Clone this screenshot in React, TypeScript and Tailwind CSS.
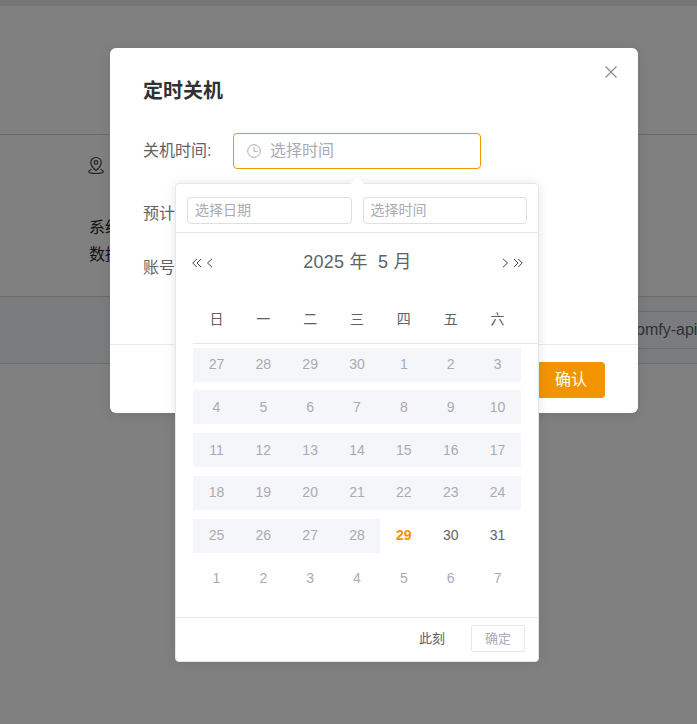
import React from "react";

const FONT = "font-['Liberation_Sans','Noto_Sans_CJK_SC',sans-serif]";

type Day = { t: number; kind: "off" | "range" | "today" | "now" };

const rows: Day[][] = [
  [27, 28, 29, 30, 1, 2, 3].map((t) => ({ t, kind: "range" as const })),
  [4, 5, 6, 7, 8, 9, 10].map((t) => ({ t, kind: "range" as const })),
  [11, 12, 13, 14, 15, 16, 17].map((t) => ({ t, kind: "range" as const })),
  [18, 19, 20, 21, 22, 23, 24].map((t) => ({ t, kind: "range" as const })),
  [
    ...[25, 26, 27, 28].map((t) => ({ t, kind: "range" as const })),
    { t: 29, kind: "today" as const },
    { t: 30, kind: "now" as const },
    { t: 31, kind: "now" as const },
  ],
  [1, 2, 3, 4, 5, 6, 7].map((t) => ({ t, kind: "off" as const })),
];

function Chevron({ dir, double }: { dir: "l" | "r"; double?: boolean }) {
  const flip = dir === "r" ? "scale(-1 1) translate(-10 0)" : undefined;
  return (
    <svg width={double ? 10 : 7} height="10" viewBox={double ? "0 0 10 10" : dir === "r" ? "3 0 7 10" : "0 0 7 10"} fill="none" stroke="#3f4247" strokeWidth="1" className="block">
      <g transform={flip}>
        {double ? (
          <>
            <path d="M4.800 1 .8 5l4 4" />
            <path d="M9 1 5 5l4 4" />
          </>
        ) : (
          <path d="M6 .8 1.500 5 6 9.200" />
        )}
      </g>
    </svg>
  );
}

export default function App() {
  return (
    <div className={`${FONT} relative w-[697px] h-[724px] overflow-hidden bg-[#808080]`}>
      {/* dimmed page behind the dialog */}
      <div className="h-[6px] bg-[#757678]" />
      <div className="h-[128px]" />
      <div className="h-[162px] border-t border-[#6a6b6e] pl-[88px] pt-[21px] text-[16px] text-[#111111]">
        <svg width="16" height="20" viewBox="0 0 16 20" fill="none" stroke="#1d2126" strokeWidth="1.2" className="block">
          <path d="M8 1.500c-3.100 0-5.200 2.300-5.200 5 0 3 2.800 6 5.200 8 2.400-2 5.200-5 5.200-8 0-2.700-2.100-5-5.200-5z" />
          <circle cx="8" cy="6.500" r="1.800" />
          <path d="M3.500 13.200C1.800 14 .8 15 .8 15.800c0 1 2.500 1.700 7.200 1.700s7.200-.7 7.200-1.700c0-.8-1-1.800-2.700-2.600" />
        </svg>
        <div className="mt-[38px] ml-[1px] leading-[27px]">
          <div>系统</div>
          <div>数据</div>
        </div>
      </div>
      <div className="h-[68px] border-t border-b border-[#6a6b6e] bg-[#7b7c7d] pt-[14px] pl-[620px]">
        <div className="h-[38px] border-t border-b border-[#6a6b6e] pl-[8px] text-[16px] leading-[35px] text-[#2e3136] whitespace-nowrap overflow-hidden">
          comfy-api
        </div>
      </div>

      {/* dialog */}
      <div className="absolute left-[110px] top-[48px] w-[528px] h-[365px] rounded-[6px] bg-white flex flex-col shadow-[0_2px_12px_rgba(0,0,0,0.1)]">
        <div className="relative pl-[33px] pt-[29px] h-[85px]">
          <div className="text-[20px] leading-[28px] font-bold text-[#303133]">定时关机</div>
          <svg width="14" height="14" viewBox="0 0 14 14" fill="none" stroke="#85888e" strokeWidth="1.1" className="absolute right-[20px] top-[17px]">
            <path d="M1.500 1.500 12.500 12.500M12.500 1.500 1.500 12.500" />
          </svg>
        </div>
        <div className="flex items-center pl-[33px] h-[36px]">
          <div className="w-[90px] text-[16px] text-[#606266]">关机时间:</div>
          <div className="flex items-center w-[248px] h-[36px] rounded-[4px] border border-[#f29400] pl-[13px]">
            <svg width="14" height="14" viewBox="0 0 14 14" fill="none" stroke="#a8abb2" strokeWidth="1" className="block">
              <circle cx="7" cy="7" r="6.300" />
              <path d="M7 3.200V7.300H10.800" />
            </svg>
            <span className="ml-[9px] text-[16px] text-[#a8abb2]">选择时间</span>
          </div>
        </div>
        <div className="pl-[33px] mt-[33px] text-[16px] leading-[24px] text-[#606266]">预计</div>
        <div className="pl-[33px] mt-[30px] text-[16px] leading-[24px] text-[#606266]">账号</div>
        <div className="mt-auto h-[69px] border-t border-[#e8eaf0] flex justify-end items-start pr-[33px] pt-[17px]">
          <div className="w-[68px] h-[36px] rounded-[4px] bg-[#f29400] text-white text-[16px] flex items-center justify-center">确认</div>
        </div>
      </div>

      {/* date-time popover */}
      <div className="absolute left-[175px] top-[183px] w-[364px] h-[479px] rounded-[4px] border border-[#e4e7ed] bg-white shadow-[0_0_12px_rgba(0,0,0,0.1)] flex flex-col">
        <div className="absolute left-[177px] top-[-5px] w-[9px] h-[9px] rotate-45 bg-white" />
        <div className="relative flex justify-between pl-[11px] pr-[11px] pt-[13px] h-[49px] border-b border-[#e4e7ed]">
          {["选择日期", "选择时间"].map((p) => (
            <div key={p} className="w-[164.500px] h-[27px] rounded-[4px] border border-[#dcdfe6] pl-[7px] text-[14px] leading-[25px] text-[#a8abb2]">
              {p}
            </div>
          ))}
        </div>
        <div className="relative flex items-center justify-between pl-[16px] pr-[15px] h-[59px]">
          <div className="flex items-center gap-[4px]">
            <Chevron dir="l" double />
            <Chevron dir="l" />
          </div>
          <div className="text-[18px] tracking-[0.2px] text-[#606266] whitespace-pre">2025 年  5 月</div>
          <div className="flex items-center gap-[4px]">
            <Chevron dir="r" />
            <Chevron dir="r" double />
          </div>
        </div>
        <div className="ml-[17px]">
          <div className="grid grid-cols-[repeat(7,46.860px)] h-[51px] mt-[1px] items-center border-b border-[#e4e7ed] pt-[3px] text-[14px] text-[#606266] text-center">
            {["日", "一", "二", "三", "四", "五", "六"].map((d) => (
              <div key={d}>{d}</div>
            ))}
          </div>
          <div className="flex flex-col gap-[8.800px] pt-[3.500px]">
            {rows.map((r, i) => (
              <div key={i} className="grid grid-cols-[repeat(7,46.860px)] h-[34px]">
                {r.map((d, j) => (
                  <div
                    key={j}
                    className={`flex items-center justify-center text-[14px] ${
                      d.kind === "range"
                        ? "bg-[#f5f6fa] text-[#a8abb2]"
                        : d.kind === "off"
                          ? "text-[#a8abb2]"
                          : d.kind === "today"
                            ? "font-bold text-[#f29400]"
                            : "text-[#606266]"
                    }`}
                  >
                    {d.t}
                  </div>
                ))}
              </div>
            ))}
          </div>
        </div>
        <div className="mt-auto h-[44px] border-t border-[#e4e7ed] flex items-start justify-end pr-[13px] pt-[7px]">
          <span className="mr-[26px] text-[13px] leading-[27px] text-[#555a62]">此刻</span>
          <div className="w-[54px] h-[27px] rounded-[2px] border border-[#e4e7ed] text-[13px] text-[#a8abb2] flex items-center justify-center">确定</div>
        </div>
      </div>
    </div>
  );
}
